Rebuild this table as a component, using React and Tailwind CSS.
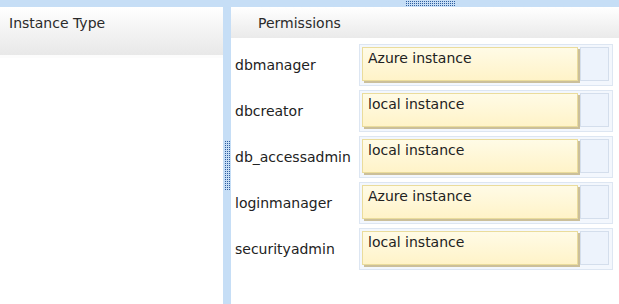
const rows = [
  { label: 'dbmanager', value: 'Azure instance' },
  { label: 'dbcreator', value: 'local instance' },
  { label: 'db_accessadmin', value: 'local instance' },
  { label: 'loginmanager', value: 'Azure instance' },
  { label: 'securityadmin', value: 'local instance' },
]

function Dots({ w, h, className }) {
  return (
    <svg width={w} height={h} className={className}>
      <defs>
        <pattern id={`dots-${w}-${h}`} width="2" height="2" patternUnits="userSpaceOnUse">
          <rect width="1" height="1" fill="#2f5d9e" />
        </pattern>
      </defs>
      <rect width={w} height={h} fill={`url(#dots-${w}-${h})`} />
    </svg>
  )
}

function DropRow({ label, value }) {
  return (
    <div className="flex items-center h-[46px]">
      <div className="w-[128px] pl-[4px] text-[14px] text-[#222]">{label}</div>
      <div className="w-[254px] h-[42px] border border-[#dde6f2] bg-[#f3f7fd] p-[2px] flex">
        <div className="w-[216px] h-[34px] bg-gradient-to-b from-[#fffbe6] to-[#fff3c8] border border-[#eadc9c] shadow-[2px_2px_0_#cbbf9a] pl-[5px] text-[14px] leading-[20px] text-[#222]">
          {value}
        </div>
        <div className="flex-1 ml-[2px] mr-[1px] h-[34px] border border-[#d4deec] bg-[#edf3fc]" />
      </div>
    </div>
  )
}

export default function App() {
  return (
    <div className="w-[619px] h-[304px] bg-[#c6def6] flex flex-col overflow-hidden font-['DejaVu_Sans',Verdana,sans-serif]">
      <div className="h-[7px] flex">
        <Dots w={50} h={5} className="ml-[406px] mt-[1px]" />
      </div>
      <div className="flex flex-1">
        <div className="w-[223px] bg-white flex flex-col">
          <div className="h-[48px] bg-gradient-to-b from-white to-[#e8e8e8] pl-[9px] pt-[6px] text-[14px] text-[#2a2a2a]">
            Instance Type
          </div>
          <div className="h-[3px] bg-[#fcfcfc]" />
        </div>
        <div className="w-[8px] flex items-center">
          <Dots w={5} h={50} className="ml-[2px] mt-[20px]" />
        </div>
        <div className="flex-1 bg-white flex flex-col">
          <div className="h-[31px] bg-gradient-to-b from-white to-[#eaeaea] pl-[27px] pt-[6px] text-[14px] text-[#2a2a2a]">
            Permissions
          </div>
          <div className="flex flex-col pt-[4px]">
            {rows.map((r) => (
              <DropRow key={r.label} label={r.label} value={r.value} />
            ))}
          </div>
        </div>
      </div>
    </div>
  )
}
